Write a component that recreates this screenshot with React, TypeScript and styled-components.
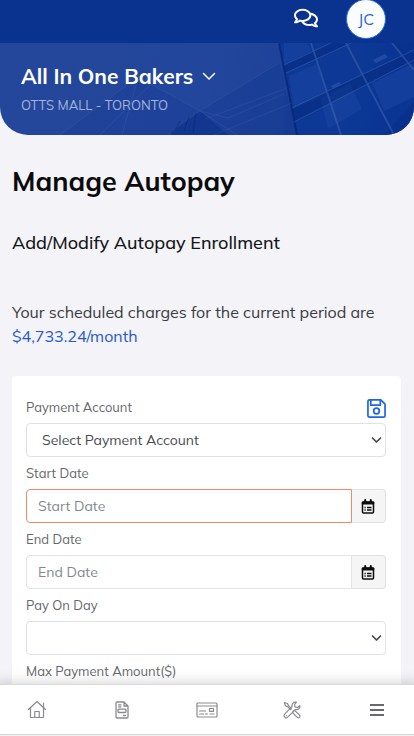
import React from "react";
import styled, { createGlobalStyle } from "styled-components";
import { FaRegComments } from "react-icons/fa";

const GlobalStyle = createGlobalStyle`
  *, *::before, *::after { box-sizing: border-box; }
  body {
    margin: 0;
    background: #f3f3f8;
    font-family: "Mulish", "Muli", "Lato", "Liberation Sans", sans-serif;
    color: #3a3c40;
  }
  button, input, select { font: inherit; color: inherit; }
`;

const Shell = styled.div`
  display: flex;
  flex-direction: column;
  height: 100vh;
`;

const TopBar = styled.header`
  display: flex;
  flex: none;
  align-items: center;
  justify-content: flex-end;
  gap: 28px;
  height: 43px;
  padding: 0 28px 6px 0;
  background: #0a338f;
`;

const IconButton = styled.button`
  display: flex;
  align-items: center;
  justify-content: center;
  padding: 0;
  border: 0;
  background: none;
  cursor: pointer;
`;

const ChatButton = styled(IconButton)`
  margin-bottom: 2px;
  color: #fff;
`;

const Avatar = styled(IconButton)`
  flex: none;
  width: 40px;
  height: 40px;
  border: 1px solid #2c6be0;
  border-radius: 50%;
  background: #fbfcfe;
  color: #2a64d2;
  font-size: 16px;
`;

const Scroller = styled.main`
  flex: 1;
  min-height: 0;
  overflow: hidden auto;
  scrollbar-width: none;
`;

const Banner = styled.section`
  display: grid;
  height: 92px;
  overflow: hidden;
  border-radius: 0 0 28px 28px;
  background: linear-gradient(100deg, #24479b 0%, #22469b 50%, #1b4098 75%, #12388f 100%);
  & > * { grid-area: 1 / 1; }
`;

const Skyline = styled.svg`
  width: 100%;
  height: 92px;
`;

const BannerText = styled.div`
  z-index: 1;
  display: flex;
  flex-direction: column;
  align-items: flex-start;
  gap: 6px;
  padding: 20px 21px;
`;

const CompanyButton = styled(IconButton)`
  gap: 9px;
  color: #fff;
  font-size: 21px;
  font-weight: 700;
  line-height: 26px;
`;

const Branch = styled.span`
  color: #a3b3da;
  font-size: 13px;
  line-height: 20px;
`;

const Content = styled.div`
  padding: 30px 13px 0 12px;
`;

const Title = styled.h1`
  margin: 0;
  color: #0b0b0d;
  font-size: 27px;
  font-weight: 700;
  line-height: 32px;
`;

const Subtitle = styled.h2`
  margin: 34px 0 0;
  color: #151618;
  font-size: 18px;
  font-weight: 500;
  line-height: 24px;
`;

const Charges = styled.p`
  margin: 45px 0 0;
  font-size: 16px;
  line-height: 24px;
`;

const Amount = styled.a`
  display: block;
  color: #2558cf;
  text-decoration: none;
`;

const Card = styled.form`
  margin: 28px 0 24px;
  padding: 21px 15px 20px 14px;
  border-radius: 4px;
  background: #fff;
`;

const Field = styled.div`
  display: flex;
  flex-direction: column;
  margin-bottom: 6px;
`;

const LabelRow = styled.div`
  display: flex;
  align-items: flex-start;
  justify-content: space-between;
  height: 26px;
`;

const Label = styled.label`
  color: #66686d;
  font-size: 13px;
  line-height: 20px;
`;

const SaveButton = styled(IconButton)`
  padding-top: 2px;
  color: #1d66e5;
`;

const SelectBox = styled.div`
  display: grid;
  align-items: center;
  & > * { grid-area: 1 / 1; }
  & > svg {
    justify-self: end;
    margin-right: 4px;
    color: #45484d;
    pointer-events: none;
  }
`;

const Select = styled.select`
  appearance: none;
  width: 100%;
  height: 34px;
  padding: 0 24px 0 15px;
  border: 1px solid #dfe2e6;
  border-radius: 4px;
  background: #fff;
  color: #484c52;
  font-size: 14px;
`;

const DateGroup = styled.div`
  display: flex;
  height: 34px;
`;

const TextInput = styled.input<{ $invalid?: boolean; $joined?: boolean }>`
  flex: 1;
  min-width: 0;
  min-height: 34px;
  padding: 0 11px;
  border: 1px solid ${(p) => (p.$invalid ? "#ee8a6c" : "#dfe5e9")};
  border-radius: ${(p) => (p.$joined ? "4px 0 0 4px" : "4px")};
  background: #fff;
  font-size: 14px;
  outline: 0;
  &::placeholder { color: #84898f; opacity: 1; }
`;

const DateButton = styled(IconButton)`
  width: 34px;
  padding-right: 2px;
  border: 1px solid #dfe2e6;
  border-left: 0;
  border-radius: 0 4px 4px 0;
  background: #f5f5f5;
  color: #0c0c0e;
`;

const NavClip = styled.div`
  flex: none;
  margin-top: -14px;
  padding: 14px 0 1px;
  overflow: hidden;
  pointer-events: none;
  & > * { pointer-events: auto; }
`;

const NavBar = styled.nav`
  display: grid;
  grid-template-columns: repeat(5, 1fr);
  align-items: center;
  height: 51px;
  margin: 0 -5px;
  border-top: 1px solid #d9d9dc;
  border-bottom: 1px solid #d5d5d8;
  background: #fff;
  box-shadow: 0 -2px 12px rgba(0, 0, 0, 0.16), 0 4px 0 #fff;
`;

const NavLink = styled.a<{ $strong?: boolean }>`
  display: flex;
  justify-content: center;
  color: ${(p) => (p.$strong ? "#69696c" : "#8b8b8e")};
`;

const Icon = ({ w = 20, h = 20, vb, sw = 1, children }: {
  w?: number; h?: number; vb?: string; sw?: number; children: React.ReactNode;
}) => (
  <svg width={w} height={h} viewBox={vb ?? `0 0 ${w} ${h}`} fill="none" stroke="currentColor"
    strokeWidth={sw} strokeLinecap="round" strokeLinejoin="round" aria-hidden="true">
    {children}
  </svg>
);

const ChevronIcon = () => (
  <Icon w={14} h={10} sw={1.5}><path d="M1.500 2.500 7 8l5.500-5.500" /></Icon>
);

const ArrowIcon = () => (
  <Icon w={11} h={8} sw={1.7}><path d="M1.500 2 5.500 6l4-4" /></Icon>
);

const SaveIcon = () => (
  <Icon w={19} h={19} vb="0 0 20 20" sw={1.8}>
    <path d="M2.500 1h12L19 5.500v12a1.500 1.500 0 0 1-1.500 1.500h-15A1.500 1.500 0 0 1 1 17.500v-15A1.500 1.500 0 0 1 2.500 1Z" />
    <path d="M4 1v5.500h10V1" />
    <circle cx="10" cy="12.700" r="3" />
  </Icon>
);

const CalendarIcon = () => (
  <Icon w={14} h={15} sw={1.5}>
    <rect x="1.500" y="3" width="11" height="11" rx="1" />
    <path d="M1.500 3.200h11v1.500h-11z" fill="currentColor" />
    <path d="M4.200 1v2M9.800 1v2" strokeWidth="2" />
    <path d="M3.500 8.500h1.200M6 8.500h4.500M3.500 11h1.200M6 11h4.500" strokeLinecap="butt" strokeWidth="1.500" />
  </Icon>
);

const HomeIcon = () => (
  <Icon w={20} h={19} sw={1.2}>
    <path d="M1.500 9.500 10 1.500l8.500 8" />
    <path d="M3.500 8v9.500h13V8M7.800 17.500v-6h4.400v6M16.500 7.300V3" />
  </Icon>
);

const InvoiceIcon = () => (
  <Icon w={14} h={18} sw={1.3}>
    <path d="M2 1h7l4 4v11a1 1 0 0 1-1 1H2a1 1 0 0 1-1-1V2a1 1 0 0 1 1-1ZM9 1v4h4" />
    <path d="M3.500 3.800h2.500M3.500 5.800h2.500M8.500 14.500h2" />
    <rect x="3" y="8.200" width="8" height="3.300" rx="1" />
  </Icon>
);

const CheckIcon = () => (
  <Icon w={22} h={16} sw={1.2}>
    <rect x="1" y="1" width="20" height="14" rx="1" />
    <path d="M1 4h20M3.500 9h6M3.500 12h4M9.500 12h2M14 12h4" />
    <rect x="13.500" y="6.500" width="4" height="2.800" />
  </Icon>
);

const ToolsIcon = () => (
  <Icon w={18} h={18} sw={1.2}>
    <path d="M1.500 1.500 4.500 2.500 5.500 4.700l3 3L7.500 8.700l-3-3L2.300 4.600Z" />
    <path d="m10.300 10 1.400-.7 4.800 4.800c1.500 1.500-.8 3.800-2.300 2.300l-4.700-4.800Z" />
    <path d="M16.800 4.700 14.500 6.500 12 5.800 11.600 3.500 13.400 1.200C10.700.7 8.500 2.800 9.100 5.400L1.700 13.100c-2 2 1 4.900 3 3l7.700-7.500c2.600.6 4.900-1.400 4.400-3.900Z" />
    <path d="M3.300 14.700h.1" />
  </Icon>
);

const MenuIcon = () => (
  <Icon w={14} h={14} sw={2}><path d="M0 2h14M0 7h14M0 12h14" strokeLinecap="butt" /></Icon>
);

const NAV = [
  { label: "Home", icon: <HomeIcon /> },
  { label: "Invoices", icon: <InvoiceIcon /> },
  { label: "Payments", icon: <CheckIcon /> },
  { label: "Maintenance", icon: <ToolsIcon /> },
  { label: "Menu", icon: <MenuIcon />, strong: true },
];

const BuildingArt = () => (
  <Skyline viewBox="0 0 414 92" preserveAspectRatio="xMaxYMid slice" aria-hidden="true">
    <path d="M279 0H414V92H297Z" fill="#0b3795" opacity=".75" />
    <path d="m171 92 29-24L279 20l18 72Z" fill="#0f3691" opacity=".3" />
    <path d="m171 88 29-20 28 24h-57Z" fill="#082d87" opacity=".5" />
    <path d="M60 92 138 34l62 34-29 24Z" fill="#173d94" opacity=".3" />
    <g fill="#2450a8" opacity=".35">
      <path d="m289 33 28-12 11 30-34 15ZM284 0h24l3 8-27 14ZM320 55l30-15 12 26-34 20ZM372 40l42-20v34l-30 14Z" />
    </g>
    <g fill="#052a80" opacity=".5">
      <path d="M284 22 331 0h20L286 30Z" />
      <path d="M292 65 414 7v10L294 79Z" />
      <path d="M392 0h22v27ZM384 92l30-34v34Z" opacity=".6" />
    </g>
    <path d="m279 0 18 92" fill="none" stroke="#05256f" strokeWidth="2" opacity=".7" />
    <g fill="none" stroke="#5f82c8" opacity=".32">
      <path d="m311 0 30 92M346 0l48 92M392 0l22 27" strokeWidth="1.800" />
      <path d="M284 22 331 0M286 30 351 0M292 65 414 7M294 79 414 17" strokeWidth="1" />
    </g>
    <g fill="none" stroke="#6f8dcb" opacity=".24">
      <path d="m200 68 79-48M171 88l29-20 37 24M200 68l28 7 56-24M205 76l82-31M214 92l78-32M138 34l62 34M138 34 60 92M138 34l-16 58M100 92l50-50" strokeWidth=".6" />
    </g>
    <path d="m176 86 4-8M184 88l5-14M193 90l3-20" fill="none" stroke="#06266f" opacity=".5" />
    <path d="m373 17 12-6 3 3-12 6ZM331 43l8-4 2 2-8 4Z" fill="#5478bd" opacity=".3" />
  </Skyline>
);

export default function App() {
  return (
    <Shell>
      <GlobalStyle />
      <TopBar>
        <ChatButton aria-label="Messages"><FaRegComments size={24} /></ChatButton>
        <Avatar aria-label="Account JC">JC</Avatar>
      </TopBar>
      <Scroller>
        <Banner>
          <BuildingArt />
          <BannerText>
            <CompanyButton>All In One Bakers <ChevronIcon /></CompanyButton>
            <Branch>OTTS MALL - TORONTO</Branch>
          </BannerText>
        </Banner>
        <Content>
          <Title>Manage Autopay</Title>
          <Subtitle>Add/Modify Autopay Enrollment</Subtitle>
          <Charges>
            Your scheduled charges for the current period are
            <Amount href="#charges">$4,733.24/month</Amount>
          </Charges>
          <Card onSubmit={(e) => e.preventDefault()}>
            <Field>
              <LabelRow>
                <Label htmlFor="account">Payment Account</Label>
                <SaveButton type="submit" aria-label="Save"><SaveIcon /></SaveButton>
              </LabelRow>
              <SelectBox>
                <Select id="account"><option>Select Payment Account</option></Select>
                <ArrowIcon />
              </SelectBox>
            </Field>
            <Field>
              <LabelRow><Label htmlFor="start">Start Date</Label></LabelRow>
              <DateGroup>
                <TextInput id="start" placeholder="Start Date" $joined $invalid />
                <DateButton type="button" aria-label="Pick start date"><CalendarIcon /></DateButton>
              </DateGroup>
            </Field>
            <Field>
              <LabelRow><Label htmlFor="end">End Date</Label></LabelRow>
              <DateGroup>
                <TextInput id="end" placeholder="End Date" $joined />
                <DateButton type="button" aria-label="Pick end date"><CalendarIcon /></DateButton>
              </DateGroup>
            </Field>
            <Field>
              <LabelRow><Label htmlFor="day">Pay On Day</Label></LabelRow>
              <SelectBox>
                <Select id="day"><option></option></Select>
                <ArrowIcon />
              </SelectBox>
            </Field>
            <Field>
              <LabelRow><Label htmlFor="max">Max Payment Amount($)</Label></LabelRow>
              <TextInput id="max" />
            </Field>
          </Card>
        </Content>
      </Scroller>
      <NavClip>
        <NavBar>
          {NAV.map((n) => (
            <NavLink key={n.label} href={`#${n.label.toLowerCase()}`} aria-label={n.label} $strong={n.strong}>{n.icon}</NavLink>
          ))}
        </NavBar>
      </NavClip>
    </Shell>
  );
}
